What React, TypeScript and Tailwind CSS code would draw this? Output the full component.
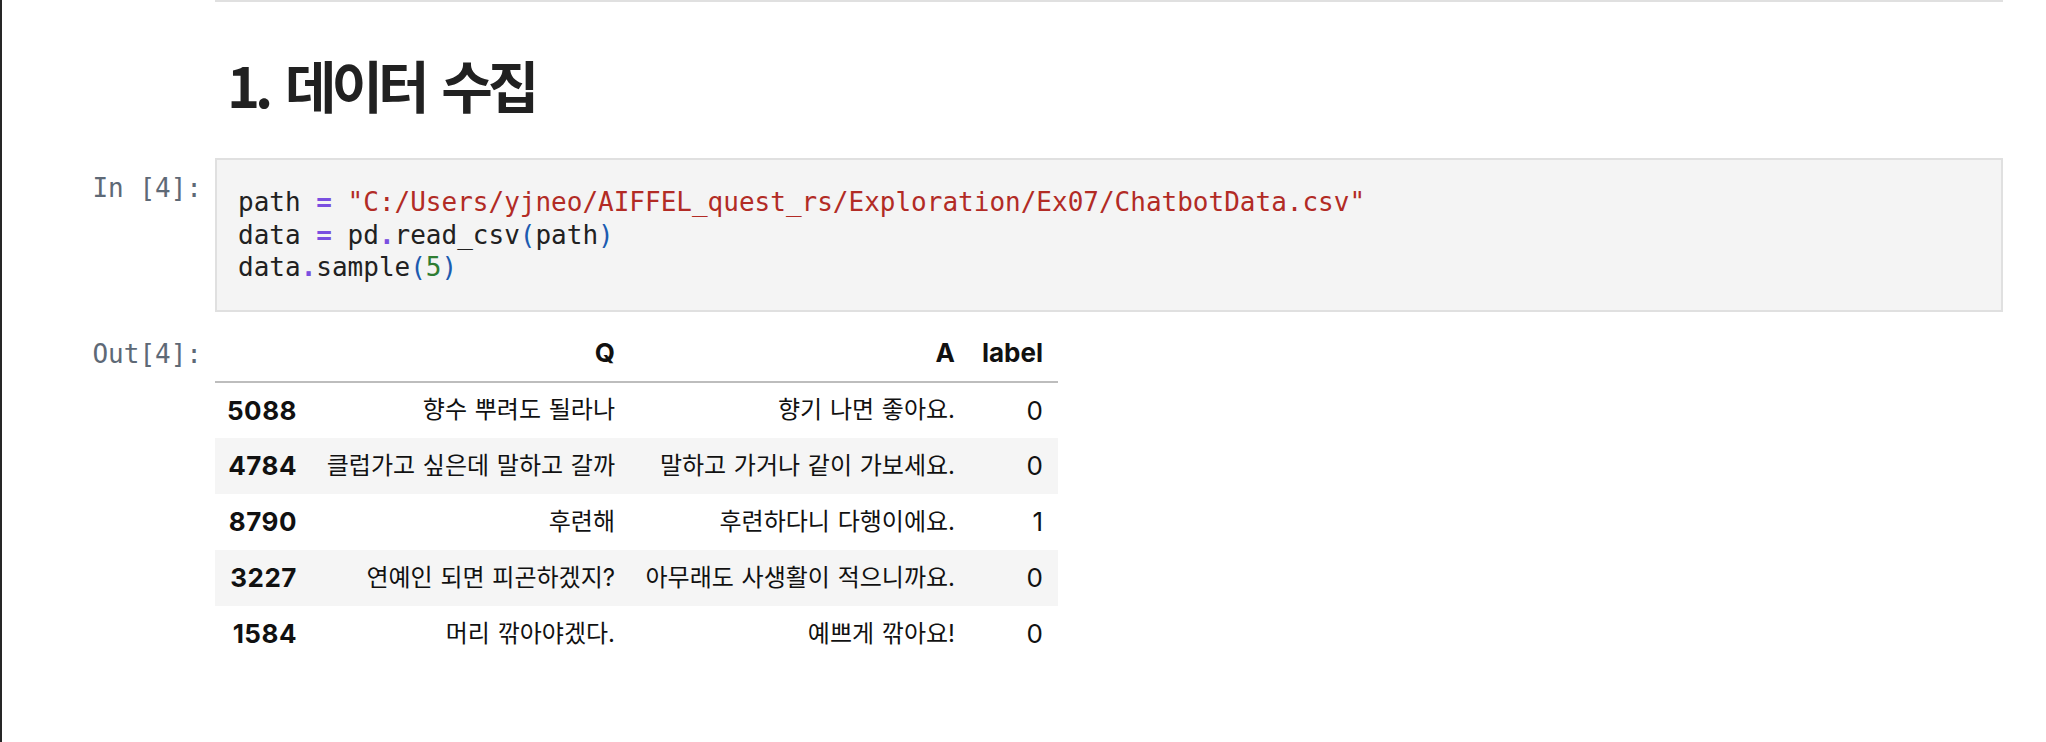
const mono = "font-['DejaVu_Sans_Mono','Liberation_Mono',monospace]";

type Row = { idx: string; q: string; a: string; label: string };

const rows: Row[] = [
  { idx: "5088", q: "향수 뿌려도 될라나", a: "향기 나면 좋아요.", label: "0" },
  { idx: "4784", q: "클럽가고 싶은데 말하고 갈까", a: "말하고 가거나 같이 가보세요.", label: "0" },
  { idx: "8790", q: "후련해", a: "후련하다니 다행이에요.", label: "1" },
  { idx: "3227", q: "연예인 되면 피곤하겠지?", a: "아무래도 사생활이 적으니까요.", label: "0" },
  { idx: "1584", q: "머리 깎아야겠다.", a: "예쁘게 깎아요!", label: "0" },
];

function Op({ children }: { children: string }) {
  return <span className="font-bold text-[#7a4fe0]">{children}</span>;
}

function Paren({ children }: { children: string }) {
  return <span className="text-[#1c5bb0]">{children}</span>;
}

function Prompt({ children }: { children: string }) {
  return (
    <div
      className={`w-[213px] shrink-0 pr-[13px] text-right text-[26px] leading-[32.5px] text-[#5e6976] whitespace-pre ${mono}`}
    >
      {children}
    </div>
  );
}

export default function App() {
  return (
    <div className="min-h-[742px] w-full border-l-2 border-[#262626] bg-white font-['Inter','Noto_Sans_CJK_KR',sans-serif]">
      <div className="ml-[213px] h-[2px] w-[1788px] bg-[#e0e0e0]" />

      <h1 className="ml-[213px] mt-[47px] pl-[12px] text-[56px] font-semibold leading-[70px] tracking-[-5px] [word-spacing:9px] text-[#212121] font-['Noto_Sans_CJK_KR',sans-serif]">
        1. 데이터 수집
      </h1>

      {/* input cell */}
      <div className="mt-[39px] flex items-start">
        <div className="pt-[14px]">
          <Prompt>In [4]:</Prompt>
        </div>
        <div
          className={`w-[1788px] border-2 border-[#e0e0e0] bg-[#f4f4f4] px-[21px] py-[26px] text-[26px] leading-[32.5px] text-[#212121] whitespace-pre ${mono}`}
        >
          <div>
            path <Op>=</Op>{" "}
            <span className="text-[#b22b25]">
              "C:/Users/yjneo/AIFFEL_quest_rs/Exploration/Ex07/ChatbotData.csv"
            </span>
          </div>
          <div>
            data <Op>=</Op> pd<Op>.</Op>read_csv<Paren>(</Paren>path
            <Paren>)</Paren>
          </div>
          <div>
            data<Op>.</Op>sample<Paren>(</Paren>
            <span className="text-[#2f7d32]">5</span>
            <Paren>)</Paren>
          </div>
        </div>
      </div>

      {/* output cell */}
      <div className="mt-[12px] flex items-start">
        <div className="pt-[14px]">
          <Prompt>Out[4]:</Prompt>
        </div>
        <table className="border-collapse text-[#111]">
          <thead>
            <tr className="h-[58px] border-b-2 border-[#bdbdbd] text-[26px] font-bold">
              <th className="w-[96px]" />
              <th className="w-[318px] pr-[14px] text-right">Q</th>
              <th className="w-[340px] pr-[14px] text-right">A</th>
              <th className="w-[89px] pr-[15px] text-right">label</th>
            </tr>
          </thead>
          <tbody>
            {rows.map((r, i) => (
              <tr
                key={r.idx}
                className={`h-[56px] ${i % 2 === 1 ? "bg-[#f5f5f5]" : "bg-white"}`}
              >
                <td className="pr-[14px] text-right text-[26px] font-bold tracking-[0.5px]">
                  {r.idx}
                </td>
                <td className="pr-[14px] text-right text-[24px] [word-spacing:1px]">
                  {r.q}
                </td>
                <td className="pr-[14px] text-right text-[24px] [word-spacing:1px]">
                  {r.a}
                </td>
                <td className="pr-[15px] text-right text-[26px]">{r.label}</td>
              </tr>
            ))}
          </tbody>
        </table>
      </div>
    </div>
  );
}
